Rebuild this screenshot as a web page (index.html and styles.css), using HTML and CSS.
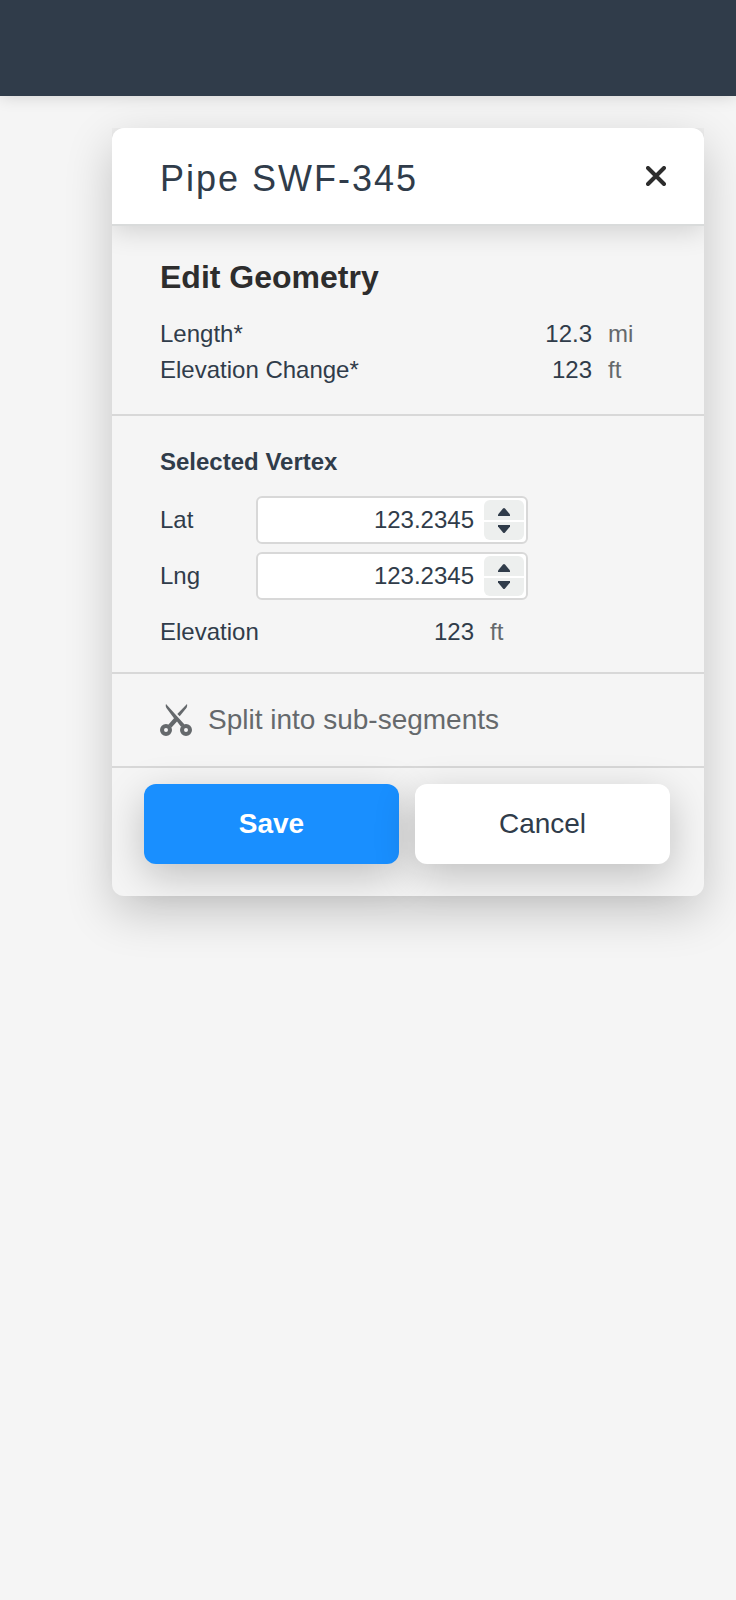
FILE: index.html
```html
<!DOCTYPE html>
<html lang="en">
<head>
<meta charset="utf-8">
<meta name="viewport" content="width=device-width, initial-scale=1">
<title>Pipe SWF-345</title>
<link rel="stylesheet" href="styles.css">
</head>
<body>
<header class="topbar"></header>
<main class="workspace">
  <form class="panel">
    <div class="panel-header">
      <h1 class="panel-title">Pipe SWF-345</h1>
      <button class="close" type="button" aria-label="Close">
        <svg width="20" height="20" viewBox="0 0 20 20" aria-hidden="true"><path d="M2 2 18 18M18 2 2 18" fill="none" stroke="currentColor" stroke-width="4" stroke-linecap="round"/></svg>
      </button>
    </div>
    <section class="section geometry">
      <h2 class="heading">Edit Geometry</h2>
      <dl class="facts">
        <div class="fact"><dt>Length*</dt><dd class="value">12.3</dd><dd class="unit">mi</dd></div>
        <div class="fact"><dt>Elevation Change*</dt><dd class="value">123</dd><dd class="unit">ft</dd></div>
      </dl>
    </section>
    <section class="section vertex">
      <h3 class="subheading">Selected Vertex</h3>
      <div class="row">
        <label class="label" for="lat">Lat</label>
        <div class="field">
          <input class="input" id="lat" type="text" inputmode="decimal" value="123.2345">
          <div class="stepper">
            <button class="step up" type="button" aria-label="Increase latitude"><svg width="12" height="8" viewBox="0 0 12 8" aria-hidden="true"><path d="M5 .5Q6-.5 7 .5L12 6.500V8H0V6.500Z" fill="currentColor"/></svg></button>
            <button class="step down" type="button" aria-label="Decrease latitude"><svg width="12" height="8" viewBox="0 0 12 8" aria-hidden="true"><path d="M5 7.500Q6 8.500 7 7.500L12 1.500V0H0V1.500Z" fill="currentColor"/></svg></button>
          </div>
        </div>
      </div>
      <div class="row">
        <label class="label" for="lng">Lng</label>
        <div class="field">
          <input class="input" id="lng" type="text" inputmode="decimal" value="123.2345">
          <div class="stepper">
            <button class="step up" type="button" aria-label="Increase longitude"><svg width="12" height="8" viewBox="0 0 12 8" aria-hidden="true"><path d="M5 .5Q6-.5 7 .5L12 6.500V8H0V6.500Z" fill="currentColor"/></svg></button>
            <button class="step down" type="button" aria-label="Decrease longitude"><svg width="12" height="8" viewBox="0 0 12 8" aria-hidden="true"><path d="M5 7.500Q6 8.500 7 7.500L12 1.500V0H0V1.500Z" fill="currentColor"/></svg></button>
          </div>
        </div>
      </div>
      <div class="row">
        <span class="label">Elevation</span>
        <div class="reading"><span class="value">123</span><span class="unit">ft</span></div>
      </div>
    </section>
    <button class="split" type="button">
      <svg width="32" height="32" viewBox="0 0 32 32" aria-hidden="true">
        <path d="M6 0C5.500 1.500 5.700 3 6.600 4.200L14 14.300 8.300 20.800 11.500 23.500 17 17.500 21 22.800 24.500 20.500Z" fill="currentColor"/>
        <path d="M27 0C27.500 1.500 27 3.200 26 4.500L19.700 12.200 17.300 9.900Z" fill="currentColor"/>
        <circle cx="6" cy="26" r="4" fill="none" stroke="currentColor" stroke-width="4"/>
        <circle cx="26" cy="26" r="4" fill="none" stroke="currentColor" stroke-width="4"/>
      </svg>
      <span>Split into sub-segments</span>
    </button>
    <div class="actions">
      <button class="button primary" type="submit">Save</button>
      <button class="button" type="button">Cancel</button>
    </div>
  </form>
</main>
</body>
</html>
```
FILE: styles.css
```css
* {
  box-sizing: border-box;
}

body {
  margin: 0;
  min-height: 100vh;
  background: #f5f5f5;
  color: #303c4a;
  font: 24px/36px "Liberation Sans", Arial, sans-serif;
}

h1, h2, h3, dl, dd {
  margin: 0;
}

button {
  margin: 0;
  padding: 0;
  border: 0;
  background: none;
  color: inherit;
  font: inherit;
  cursor: pointer;
}

svg {
  display: block;
  flex: none;
}

.topbar {
  height: 96px;
  background: #303c4a;
  box-shadow: 0 0 16px rgba(0, 0, 0, 0.16);
}

.workspace {
  padding: 32px 32px 32px 112px;
}

.panel {
  border-radius: 12px;
  background: #f5f5f5;
  box-shadow: 0 16px 48px rgba(0, 0, 0, 0.2);
}

.panel-header {
  display: flex;
  align-items: center;
  justify-content: space-between;
  min-height: 96px;
  padding: 0 28px 0 48px;
  border-radius: 12px 12px 0 0;
  background: #fff;
  box-shadow: 0 2px 0 #d9dbdb, 0 6px 28px rgba(0, 0, 0, 0.16);
  clip-path: inset(0 0 -40px 0);
}

.panel-title {
  padding-top: 6px;
  font-size: 36px;
  font-weight: 400;
  line-height: 48px;
  letter-spacing: 2px;
}

.close {
  display: grid;
  place-items: center;
  width: 40px;
  height: 40px;
  color: #2d2d2d;
}

.section {
  border-bottom: 2px solid #d8d8d8;
}

.geometry {
  padding: 33px 32px 26px 48px;
}

.heading {
  margin-bottom: 19px;
  color: #2d2d2d;
  font-size: 32px;
  line-height: 40px;
}

.fact {
  display: flex;
}

.fact dt {
  flex: 1;
}

.value {
  text-align: right;
}

.unit {
  margin-left: 16px;
  color: #65696c;
}

.fact .unit {
  width: 64px;
}

.vertex {
  padding: 28px 32px 16px 48px;
}

.subheading {
  margin-bottom: 16px;
  font-size: 24px;
}

.row {
  display: flex;
  align-items: center;
}

.row + .row {
  margin-top: 8px;
}

.label {
  width: 96px;
}

.field {
  display: flex;
  width: 272px;
  height: 48px;
  padding: 2px;
  border: 2px solid #d8d8d8;
  border-radius: 6px;
  background: #fff;
}

.input {
  flex: 1;
  min-width: 0;
  padding: 0 10px;
  border: 0;
  outline: 0;
  background: none;
  color: inherit;
  font: inherit;
  text-align: right;
}

.stepper {
  display: grid;
  grid-template-rows: 20px 18px;
  gap: 2px;
  width: 40px;
}

.step {
  display: flex;
  justify-content: center;
  background: #edefee;
}

.up {
  align-items: flex-end;
  padding-bottom: 4px;
  border-radius: 6px 6px 0 0;
}

.down {
  align-items: flex-start;
  padding-top: 3px;
  border-radius: 0 0 6px 6px;
}

.reading {
  display: flex;
  width: 272px;
  min-height: 48px;
  align-items: center;
}

.reading .value {
  flex: 1;
}

.reading .unit {
  width: 38px;
}

.split {
  display: flex;
  align-items: center;
  gap: 16px;
  width: 100%;
  min-height: 94px;
  padding: 0 32px 0 48px;
  border-bottom: 2px solid #d8d8d8;
  color: #65696c;
  font-size: 28px;
  text-align: left;
}

.actions {
  display: flex;
  gap: 16px;
  padding: 16px 34px 32px 32px;
}

.button {
  flex: 1;
  height: 80px;
  border-radius: 12px;
  background: #fff;
  box-shadow: 0 12px 40px rgba(0, 0, 0, 0.22);
  font-size: 28px;
}

.primary {
  background: #198fff;
  color: #fff;
  font-weight: 700;
}
```
